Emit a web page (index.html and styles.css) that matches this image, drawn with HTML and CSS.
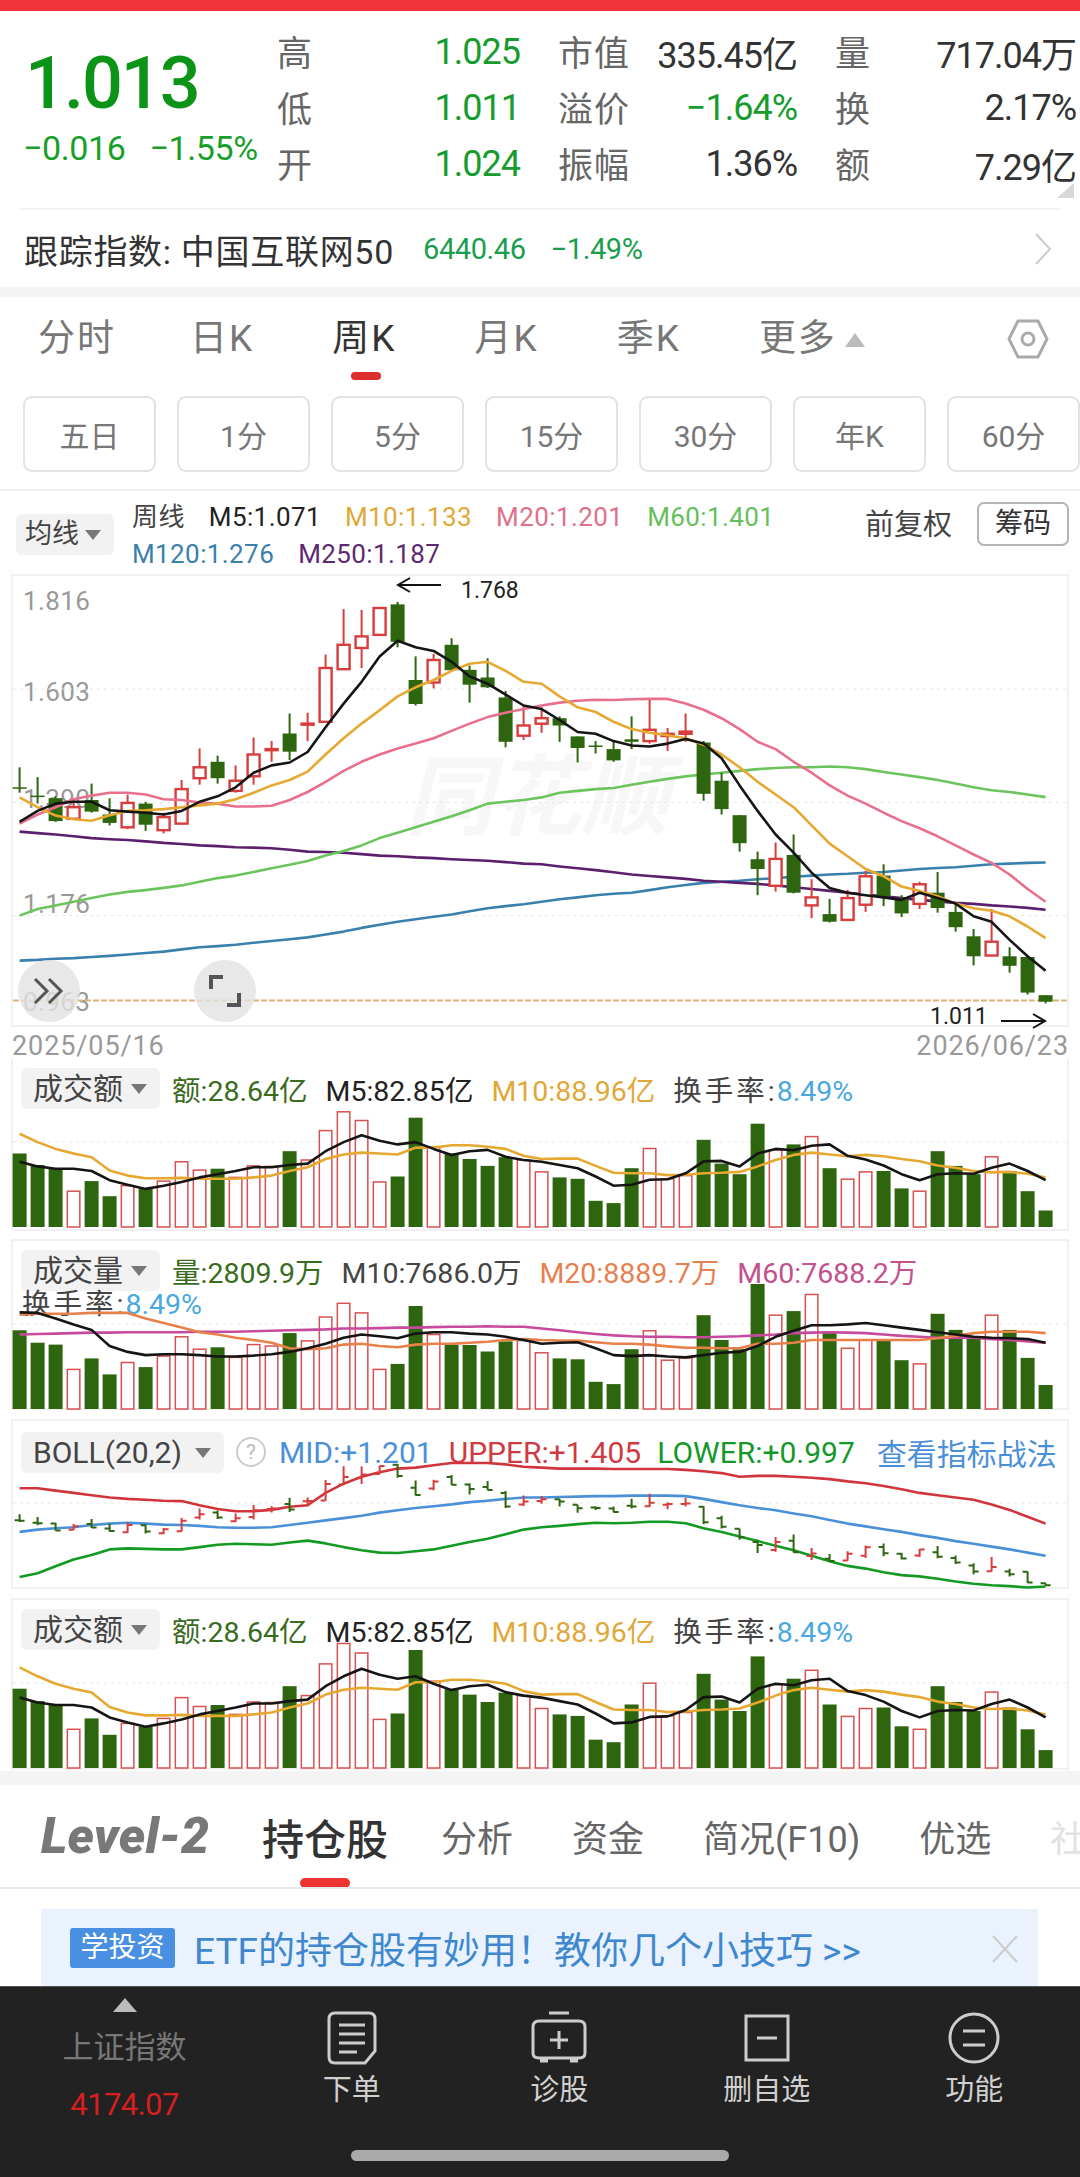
FILE: index.html
```html
<!DOCTYPE html>
<html>
<head>
    <meta charset="UTF-8">
    <meta name="viewport" content="width=device-width, initial-scale=1.0">
    <title>ETF 行情</title>
    <link rel="stylesheet" href="styles.css">
</head>
<body>

<div class="top-bar"></div>

<section class="quote">
    <div class="quote-main">
        <div class="price">1.013</div>
        <div class="change"><span>−0.016</span><span>−1.55%</span></div>
    </div>
    <div class="stats">
        <div class="stat"><span class="stat-label">高</span><span class="stat-value up">1.025</span></div>
        <div class="stat"><span class="stat-label">市值</span><span class="stat-value">335.45亿</span></div>
        <div class="stat"><span class="stat-label">量</span><span class="stat-value">717.04万</span></div>
        <div class="stat"><span class="stat-label">低</span><span class="stat-value up">1.011</span></div>
        <div class="stat"><span class="stat-label">溢价</span><span class="stat-value up">−1.64%</span></div>
        <div class="stat"><span class="stat-label">换</span><span class="stat-value">2.17%</span></div>
        <div class="stat"><span class="stat-label">开</span><span class="stat-value up">1.024</span></div>
        <div class="stat"><span class="stat-label">振幅</span><span class="stat-value">1.36%</span></div>
        <div class="stat"><span class="stat-label">额</span><span class="stat-value">7.29亿</span></div>
    </div>
    <div class="corner"></div>
</section>

<div class="track">
    <span class="track-name">跟踪指数: 中国互联网50</span>
    <span class="track-val">6440.46</span>
    <span class="track-val">−1.49%</span>
    <svg class="chevron" width="18" height="32" viewBox="0 0 18 32"><path d="M2 1 L16 16 L2 31"/></svg>
</div>

<div class="band"></div>

<nav class="tabs">
    <a>分时</a>
    <a>日K</a>
    <a class="active">周K</a>
    <a>月K</a>
    <a>季K</a>
    <a>更多<i class="tri-up"></i></a>
    <svg class="gear" width="42" height="40" viewBox="0 0 42 40"><path d="M2 20 L11 2 H31 L40 20 L31 38 H11 Z"/><circle cx="21" cy="20" r="6"/></svg>
</nav>

<div class="periods">
    <a>五日</a><a>1分</a><a>5分</a><a>15分</a><a>30分</a><a>年K</a><a>60分</a>
</div>

<section class="kline">
    <svg id="klinePlot" class="plot plot-main"></svg>
    <div class="kline-head">
        <div class="pill pill-ma">均线<i class="tri-down"></i></div>
        <div class="ma-legend">
            <div class="ma-row">
                <span class="c-dark">周线</span>
                <span class="c-black">M5:1.071</span>
                <span class="c-orange">M10:1.133</span>
                <span class="c-pink">M20:1.201</span>
                <span class="c-green">M60:1.401</span>
            </div>
            <div class="ma-row">
                <span class="c-blue">M120:1.276</span>
                <span class="c-purple">M250:1.187</span>
            </div>
        </div>
        <span class="adjust">前复权</span>
        <span class="chips">筹码</span>
    </div>
    <div class="kline-frame">
        <span class="watermark">同花顺</span>
        <span class="axis axis-1">1.816</span>
        <span class="axis axis-2">1.603</span>
        <span class="axis axis-3">1.390</span>
        <span class="axis axis-4">1.176</span>
        <span class="axis axis-5">0.963</span>
        <span class="note note-high">1.768</span>
        <span class="note note-low">1.011</span>
        <div class="round-btn btn-expand">
            <svg width="34" height="30" viewBox="0 0 34 30"><path d="M3 3 L15 15 L3 27 M17 3 L29 15 L17 27"/></svg>
        </div>
        <div class="round-btn btn-full">
            <svg width="32" height="32" viewBox="0 0 32 32"><path d="M2 14 V2 H14 M30 18 V30 H18"/></svg>
        </div>
    </div>
    <div class="dates"><span>2025/05/16</span><span>2026/06/23</span></div>
</section>

<section class="ind ind-amount">
    <svg id="amountPlot" class="plot"></svg>
    <div class="ind-head">
        <div class="pill">成交额<i class="tri-down"></i></div>
        <span class="c-vol">额:28.64亿</span>
        <span class="c-black">M5:82.85亿</span>
        <span class="c-orange">M10:88.96亿</span>
        <span class="c-dark turn">换手率:<em class="c-sky">8.49%</em></span>
    </div>
</section>

<section class="ind ind-volume">
    <svg id="volumePlot" class="plot"></svg>
    <div class="ind-head">
        <div class="pill">成交量<i class="tri-down"></i></div>
        <span class="c-vol">量:2809.9万</span>
        <span class="c-dark">M10:7686.0万</span>
        <span class="c-coral">M20:8889.7万</span>
        <span class="c-magenta">M60:7688.2万</span>
    </div>
    <div class="ind-sub c-dark turn">换手率:<em class="c-sky">8.49%</em></div>
</section>

<section class="ind ind-boll">
    <svg id="bollPlot" class="plot"></svg>
    <div class="ind-head">
        <div class="pill pill-boll">BOLL(20,2)<i class="tri-down"></i></div>
        <span class="help">?</span>
        <span class="c-mid">MID:+1.201</span>
        <span class="c-upper">UPPER:+1.405</span>
        <span class="c-lower">LOWER:+0.997</span>
        <span class="c-mid tactic">查看指标战法</span>
    </div>
</section>

<section class="ind ind-amount2">
    <svg id="amount2Plot" class="plot"></svg>
    <div class="ind-head">
        <div class="pill">成交额<i class="tri-down"></i></div>
        <span class="c-vol">额:28.64亿</span>
        <span class="c-black">M5:82.85亿</span>
        <span class="c-orange">M10:88.96亿</span>
        <span class="c-dark turn">换手率:<em class="c-sky">8.49%</em></span>
    </div>
</section>

<div class="band band-low"></div>

<nav class="info-tabs">
    <span class="level2">Level-2</span>
    <a class="active">持仓股</a>
    <a>分析</a>
    <a>资金</a>
    <a>简况(F10)</a>
    <a>优选</a>
    <a class="fade">社</a>
</nav>

<div class="tip-wrap">
    <div class="tip">
        <span class="tip-badge">学投资</span>
        <span class="tip-text">ETF的持仓股有妙用！教你几个小技巧 &gt;&gt;</span>
        <svg class="tip-close" width="26" height="28" viewBox="0 0 26 28"><path d="M1 1 L25 27 M25 1 L1 27"/></svg>
    </div>
</div>

<footer class="dock">
    <div class="dock-index">
        <i class="dock-tri"></i>
        <span class="dock-name">上证指数</span>
        <span class="dock-num">4174.07</span>
    </div>
    <div class="dock-item">
        <svg width="50" height="54" viewBox="0 0 50 54"><path d="M8 2 H42 Q48 2 48 8 V40 L38 52 H8 Q2 52 2 46 V8 Q2 2 8 2 Z M12 14 H38 M12 23 H38 M12 32 H38 M12 41 H30"/></svg>
        <span>下单</span>
    </div>
    <div class="dock-item">
        <svg width="58" height="54" viewBox="0 0 58 54"><path d="M19 2 H39 M9 10 H49 Q55 10 55 16 V42 Q55 47 49 47 H9 Q3 47 3 42 V16 Q3 10 9 10 Z M29 20 V38 M20 29 H38 M10 50 H18 M40 50 H48"/></svg>
        <span>诊股</span>
    </div>
    <div class="dock-item">
        <svg width="48" height="54" viewBox="0 0 48 54"><path d="M3 5 H45 V49 H3 Z M14 27 H34"/></svg>
        <span>删自选</span>
    </div>
    <div class="dock-item">
        <svg width="52" height="54" viewBox="0 0 52 54"><circle cx="26" cy="27" r="24"/><path d="M15 20 H37 M15 34 H37"/></svg>
        <span>功能</span>
    </div>
    <div class="home-bar"></div>
</footer>

<script src="chart.js"></script>
</body>
</html>
```
FILE: styles.css
```css
* {
    box-sizing: border-box;
}

body {
    margin: 0;
    width: 1080px;
    height: 2177px;
    overflow: hidden;
    position: relative;
    background-color: white;
    font-family: Roboto, "Noto Sans CJK SC", sans-serif;
    color: #333;
}

em, i {
    font-style: normal;
}

.top-bar {
    height: 11px;
    background-color: #ee333a;
}

/* Quote header */
.quote {
    position: relative;
    height: 200px;
    display: flex;
    border-bottom: 2px solid white;
}

.quote::after {
    content: "";
    position: absolute;
    left: 20px;
    right: 20px;
    bottom: -1px;
    border-top: 2px solid #f2f2f2;
}

.quote-main {
    width: 266px;
    padding: 33px 0 0 23px;
    color: #0b9416;
}

.price {
    font-size: 72px;
    line-height: 80px;
    font-weight: 500;
    letter-spacing: -2px;
    margin-left: 2px;
}

.change {
    display: flex;
    gap: 24px;
    font-size: 34px;
    line-height: 40px;
    margin-top: 4px;
    letter-spacing: -0.4px;
    color: #16a02a;
}

.stats {
    margin-left: 11px;
    display: grid;
    grid-template-columns: 243px 239px 241px;
    grid-auto-rows: 56px;
    column-gap: 38px;
    padding-top: 13px;
}

.stat {
    display: flex;
    justify-content: space-between;
    align-items: center;
}

.stat-label {
    font-size: 35px;
    color: #666;
    letter-spacing: 1px;
    margin-bottom: 4px;
}

.stat-value {
    font-size: 36px;
    letter-spacing: -1px;
    color: #333;
}

.stat-value.up {
    color: #169c2c;
}

.corner {
    position: absolute;
    right: 6px;
    bottom: 11px;
    border-left: 17px solid transparent;
    border-bottom: 15px solid #d8d8d8;
}

.track {
    height: 76px;
    display: flex;
    align-items: center;
    padding-left: 24px;
    position: relative;
}

.track-name {
    font-size: 34px;
    color: #333;
    margin-right: 29px;
    letter-spacing: 0.7px;
}

.track-val {
    font-size: 29px;
    color: #1a9e4e;
    margin-right: 25px;
    letter-spacing: -0.4px;
}

.chevron {
    position: absolute;
    right: 28px;
    top: 22px;
    fill: none;
    stroke: #ccc;
    stroke-width: 2;
}

.band {
    height: 10px;
    background-color: #f4f4f4;
}

/* Period tabs */
.tabs {
    height: 99px;
    display: flex;
    gap: 78px;
    padding: 19px 0 0 38px;
    position: relative;
    font-size: 37px;
    line-height: 46px;
    letter-spacing: 2px;
    color: #777;
}

.tabs a {
    position: relative;
}

.tabs a:first-child {
    margin-right: -4px;
}

.tabs a.active {
    color: #333;
}

.tabs a.active::after {
    content: "";
    position: absolute;
    left: 19px;
    top: 56px;
    width: 30px;
    height: 8px;
    border-radius: 4px;
    background-color: #dc2f2f;
}

.tri-up {
    display: inline-block;
    margin-left: 8px;
    vertical-align: 4px;
    border-left: 10px solid transparent;
    border-right: 10px solid transparent;
    border-bottom: 14px solid #bbb;
}

.gear {
    position: absolute;
    left: 1007px;
    top: 22px;
    fill: none;
    stroke: #aaa;
    stroke-width: 3;
}

.periods {
    height: 93px;
    padding-left: 23px;
    display: flex;
    gap: 21px;
}

.periods a {
    width: 133px;
    height: 76px;
    flex: none;
    border: 2px solid #e2e2e2;
    border-radius: 9px;
    display: flex;
    align-items: center;
    justify-content: center;
    font-size: 30px;
    color: #777;
}

/* K line section */
.kline {
    position: relative;
    height: 570px;
    border-top: 2px solid #f0f0f0;
}

.plot {
    position: absolute;
    left: 0;
    top: 0;
    width: 1080px;
    height: 100%;
    z-index: 2;
    pointer-events: none;
}

.ln {
    fill: none;
    stroke-width: 2.6;
    stroke-linejoin: round;
}

.m5 { stroke: #151515; }
.m10 { stroke: #e6a830; }
.m20 { stroke: #e8708c; }
.m60 { stroke: #6cc45c; }
.m120 { stroke: #3a80ac; }
.m250 { stroke: #5c1f6e; }
.v20 { stroke: #e8804a; }
.v60 { stroke: #c84a9c; }
.upper { stroke: #d2343c; }
.mid { stroke: #4a90d9; }
.lower { stroke: #139a22; }

.grid {
    stroke: #e6e6e6;
    stroke-width: 1;
    stroke-dasharray: 3 4;
}

.last-gold {
    stroke: #d8b468;
    stroke-width: 2;
    stroke-dasharray: 4 4;
}

.last-red {
    stroke: #e6b0a0;
    stroke-width: 2;
    stroke-dasharray: 2 6;
    stroke-dashoffset: 4;
}

.wick-red {
    fill: none;
    stroke: #d83c3c;
    stroke-width: 2;
}

.wick-green {
    fill: none;
    stroke: #2d660f;
    stroke-width: 2;
}

.bar-red {
    fill: white;
    stroke: #d85050;
    stroke-width: 1.5;
}

.bar-red.thick {
    stroke: #d83c3c;
    stroke-width: 2.4;
}

.bar-green {
    fill: #2d660f;
}

.arrow {
    fill: none;
    stroke: #111;
    stroke-width: 2;
}

.kline-head {
    height: 83px;
    display: flex;
    position: relative;
}

.pill {
    height: 41px;
    width: 139px;
    flex: none;
    background-color: #f2f2f2;
    border-radius: 6px;
    font-size: 30px;
    line-height: 41px;
    padding-left: 12px;
    color: #444;
    position: relative;
}

.pill-ma {
    width: 98px;
    margin: 23px 0 0 16px;
    font-size: 27px;
    padding-left: 9px;
}

.tri-down {
    position: absolute;
    right: 13px;
    top: 16px;
    border-left: 8px solid transparent;
    border-right: 8px solid transparent;
    border-top: 10px solid #777;
}

.ma-legend {
    margin-left: 18px;
    padding-top: 8px;
    font-size: 26px;
    line-height: 37px;
    letter-spacing: 0.4px;
}

.ma-row {
    display: flex;
    gap: 24px;
    white-space: nowrap;
}

.adjust {
    position: absolute;
    left: 865px;
    top: 12px;
    font-size: 29px;
    line-height: 44px;
    color: #444;
}

.chips {
    position: absolute;
    left: 977px;
    top: 11px;
    width: 92px;
    height: 44px;
    border: 2px solid #b5b5b5;
    border-radius: 7px;
    text-align: center;
    font-size: 28px;
    line-height: 40px;
    color: #333;
}

.c-dark { color: #444; }
.c-black { color: #222; }
.c-orange { color: #e0a838; }
.c-pink { color: #e0708a; }
.c-green { color: #66bf5a; }
.c-blue { color: #3a80ac; }
.c-purple { color: #5c2a72; }
.c-vol { color: #3b6b1e; }
.c-sky { color: #4aa8e0; }
.c-coral { color: #e6814f; }
.c-magenta { color: #c4508c; }
.c-mid { color: #4a90d9; }
.c-upper { color: #d03a42; }
.c-lower { color: #15982a; }

.kline-frame {
    position: relative;
    margin-left: 11px;
    width: 1058px;
    height: 453px;
    border: 2px solid #f0f0f0;
}

.watermark {
    position: absolute;
    left: 392px;
    top: 172px;
    font-size: 88px;
    line-height: 100px;
    font-weight: 700;
    font-style: italic;
    color: #f7f7f7;
}

.axis {
    position: absolute;
    left: 10px;
    font-size: 26px;
    line-height: 30px;
    letter-spacing: 0.4px;
    color: #999;
}

.axis-1 { top: 10px; }
.axis-2 { top: 101px; }
.axis-3 { top: 208px; }
.axis-4 { top: 313px; }
.axis-5 { top: 411px; }

.note {
    position: absolute;
    font-size: 23px;
    line-height: 28px;
    color: #222;
}

.note-high {
    left: 448px;
    top: 1px;
}

.note-low {
    left: 917px;
    top: 427px;
}

.round-btn {
    position: absolute;
    top: 384px;
    width: 62px;
    height: 62px;
    border-radius: 50%;
    background-color: rgba(226, 226, 226, 0.8);
    display: flex;
    align-items: center;
    justify-content: center;
    z-index: 3;
}

.round-btn svg {
    fill: none;
    stroke: #555;
    stroke-width: 3;
}

.btn-expand { left: 5px; }
.btn-full { left: 181px; }
.btn-full svg { stroke-width: 4; }

.dates {
    display: flex;
    justify-content: space-between;
    padding: 4px 11px 0 12px;
    font-size: 27px;
    line-height: 30px;
    letter-spacing: 0.9px;
    color: #999;
}

/* Indicator panels */
.ind {
    position: relative;
    margin-left: 11px;
    width: 1058px;
    border: 2px solid #f0f0f0;
}

.ind .plot {
    left: -13px;
    top: -2px;
    height: calc(100% + 4px);
}

.ind-amount {
    height: 172px;
    border-top: none;
    margin-bottom: 8px;
}

.ind-volume {
    height: 171px;
    margin-bottom: 9px;
}

.ind-boll {
    height: 170px;
    margin-bottom: 9px;
}

.ind-amount2 {
    height: 172px;
}

.ind-head {
    position: relative;
    display: flex;
    align-items: center;
    gap: 18px;
    margin-top: 9px;
    padding-left: 8px;
    font-size: 28.5px;
    white-space: nowrap;
}

.ind-amount .ind-head {
    padding-top: 9px;
    margin-top: 0;
}

.ind-head .pill {
    margin-right: -6px;
}

.ind-sub {
    position: relative;
    margin: -3px 0 0 9px;
    font-size: 28.5px;
    line-height: 34px;
}

/* the turnover label is set wider than the other legend texts */
.turn {
    letter-spacing: 3px;
}

.turn em {
    letter-spacing: 0;
    margin-left: -1px;
}

.pill-boll {
    width: 203px;
}

.help {
    width: 30px;
    height: 30px;
    border: 2px solid #ccc;
    border-radius: 50%;
    margin-right: -3px;
    text-align: center;
    font-size: 21px;
    line-height: 26px;
    color: #bbb;
}

.ind-boll .ind-head {
    gap: 16px;
    font-size: 30px;
}

.ind-boll .pill {
    margin-right: -4px;
}

.tactic {
    margin-left: 6px;
    font-size: 30px;
}

.band-low {
    height: 14px;
    margin-top: 1px;
}

/* Info tabs */
.info-tabs {
    position: relative;
    height: 104px;
    display: flex;
    align-items: center;
    padding-left: 41px;
    border-bottom: 2px solid #e8e8e8;
    font-size: 36px;
    color: #666;
    white-space: nowrap;
    overflow: hidden;
}

.level2 {
    width: 221px;
    flex: none;
    font-size: 50px;
    font-weight: 900;
    font-style: italic;
    color: #787878;
    letter-spacing: 0.2px;
}

.info-tabs a {
    flex: none;
    margin-right: 59px;
}

.info-tabs a.active {
    position: relative;
    font-size: 42px;
    font-weight: 500;
    color: #333;
    margin-right: 53px;
}

.info-tabs .fade {
    color: #e2e2e2;
}

.info-tabs::after {
    content: "";
    position: absolute;
    left: 300px;
    top: 93px;
    width: 50px;
    height: 10px;
    border-radius: 5px;
    background-color: #ee3333;
}

.tip-wrap {
    padding: 20px 42px 0 41px;
}

.tip {
    height: 78px;
    background-color: #eaf3fd;
    display: flex;
    align-items: center;
    padding-left: 29px;
    position: relative;
}

.tip-badge {
    width: 105px;
    height: 40px;
    border-radius: 3px;
    background-color: #4a90e2;
    color: white;
    font-size: 28px;
    line-height: 40px;
    text-align: center;
}

.tip-text {
    margin-left: 19px;
    font-size: 37px;
    color: #3f88d0;
}

.tip-close {
    position: absolute;
    right: 20px;
    top: 26px;
    fill: none;
    stroke: #ccc;
    stroke-width: 2;
}

/* Bottom dock */
.dock {
    position: absolute;
    left: 0;
    top: 1986px;
    width: 1080px;
    height: 191px;
    background-color: #222;
    border-top: 1px solid #555;
    display: grid;
    grid-template-columns: 248px repeat(4, 207.5px);
}

.dock-index {
    display: flex;
    flex-direction: column;
    align-items: center;
    padding-top: 11px;
    margin-left: 1px;
}

.dock-tri {
    border-left: 12px solid transparent;
    border-right: 12px solid transparent;
    border-bottom: 14px solid #bbb;
}

.dock-name {
    margin-top: 14px;
    font-size: 31px;
    line-height: 44px;
    color: #777;
}

.dock-num {
    margin-top: 15px;
    font-size: 31px;
    line-height: 40px;
    letter-spacing: -0.6px;
    color: #d81e1e;
}

.dock-item {
    display: flex;
    flex-direction: column;
    align-items: center;
    padding-top: 24px;
}

.dock-item svg {
    fill: none;
    stroke: #ccc;
    stroke-width: 3;
}

.dock-item span {
    margin-top: 7px;
    font-size: 29px;
    line-height: 36px;
    color: #d0d0d0;
}

.home-bar {
    position: absolute;
    left: 351px;
    top: 163px;
    width: 378px;
    height: 11px;
    border-radius: 6px;
    background-color: #aaa;
}
```
FILE: chart.js
```js
// Every series below is in y pixels read off an enlarged crop, so each plot scales them back
const barW = 14;
const barX = i => 19.6 + 18 * i;

// [wickTop, bodyTop, bodyBottom, wickBottom, isRed]
const candles = [
    [760,815,819,830,0],[787,838,842,860,0],[840,845,908,910,0],[850,870,902,905,1],
    [805,850,882,885,0],[845,890,913,920,0],[835,858,925,930,1],[855,860,918,935,0],
    [885,897,933,942,1],[795,820,915,918,1],[708,760,790,808,1],[728,745,790,805,0],
    [755,797,825,830,1],[678,725,785,808,1],[688,710,713,745,1],[612,667,717,740,0],
    [610,640,643,688,1],[450,487,635,638,1],[325,423,490,490,1],[327,400,432,487,1],
    [322,322,396,398,1],[305,312,415,430,0],[455,520,586,590,0],[448,465,527,543,1],
    [405,423,493,495,0],[480,492,533,582,0],[460,513,540,542,0],[550,568,690,705,0],
    [590,645,673,685,1],[595,625,640,665,1],[620,625,645,690,0],[675,675,707,747,0],
    [688,700,704,722,0],[690,710,741,745,0],[620,683,690,710,0],[575,657,688,695,1],
    [652,668,674,715,1],[612,662,668,690,1],[688,692,833,852,0],[775,797,875,890,0],
    [892,892,969,992,0],[992,1013,1040,1112,0],[967,1012,1086,1102,1],[945,1001,1105,1107,0],
    [1068,1118,1140,1175,1],[1122,1164,1185,1187,0],[1097,1120,1180,1183,1],[1045,1060,1138,1158,1],
    [1027,1058,1115,1142,0],[1112,1120,1162,1172,0],[1075,1082,1136,1150,1],[1048,1105,1147,1160,0],
    [1135,1158,1200,1212,0],[1205,1225,1280,1305,0],[1150,1240,1278,1280,1],[1255,1280,1306,1325,0],
    [1280,1282,1380,1385,0],[1387,1387,1405,1410,0]
];

const ma5 = [910,880,860,855,855,878,882,885,890,880,855,840,815,775,755,747,718,650,585,525,455,412,430,440,470,510,530,560,590,
    600,630,663,668,688,700,703,695,682,695,735,810,880,945,995,1050,1092,1105,1112,1118,1125,1105,1120,1135,1170,1185,1235,1280,1320];
const ma10 = [843,870,893,903,907,892,880,878,875,870,865,860,848,830,810,795,772,725,680,640,603,565,540,520,495,475,470,495,525,
    530,565,595,608,635,655,665,672,680,698,725,760,800,835,870,920,970,1005,1040,1060,1088,1100,1115,1135,1148,1155,1170,1198,1230];
const ma20 = [915,890,870,848,838,830,830,835,848,850,857,860,868,868,866,850,828,800,770,745,725,708,695,680,660,640,622,610,600,
    590,582,577,574,575,573,572,572,585,602,625,655,690,710,745,775,810,838,860,885,908,928,950,975,1000,1023,1055,1095,1130];
const ma60 = [1168,1150,1140,1130,1120,1110,1103,1098,1092,1085,1075,1065,1058,1048,1038,1028,1018,1003,990,975,955,940,925,910,895,878,860,855,850,
    843,830,825,820,817,808,800,792,785,780,775,770,765,762,760,760,758,760,765,773,780,787,795,805,815,823,828,835,842];
const ma120 = [1292,1290,1287,1285,1282,1279,1275,1271,1267,1261,1255,1252,1248,1243,1238,1233,1228,1220,1212,1202,1193,1185,1178,1171,1165,1156,1148,1142,1137,
    1130,1123,1118,1112,1108,1105,1098,1090,1084,1078,1075,1072,1068,1065,1061,1058,1055,1053,1050,1048,1044,1040,1037,1035,1031,1027,1025,1023,1022];
const ma250 = [937,941,945,950,955,958,960,964,968,971,975,977,980,981,983,987,992,993,995,999,1003,1005,1008,1010,1013,1015,1017,1021,1025,
    1027,1033,1038,1043,1049,1055,1059,1063,1067,1072,1075,1078,1081,1085,1090,1095,1100,1105,1110,1115,1120,1125,1129,1133,1136,1140,1143,1147,1152];

const amountBars = [
    [210,0],[235,0],[243,0],[292,1],[270,0],[303,0],[280,1],[287,0],[270,1],[228,1],[246,1],[243,0],[262,1],[237,1],[238,1],
    [205,0],[224,1],[160,1],[119,1],[138,1],[272,1],[260,0],[132,0],[195,1],[210,0],[222,0],[237,0],[218,0],[224,1],[250,1],
    [262,0],[265,0],[313,0],[318,0],[242,0],[199,1],[265,1],[258,1],[180,0],[232,0],[255,0],[145,0],[202,1],[190,0],[173,1],
    [242,0],[266,1],[250,1],[248,0],[286,0],[292,1],[205,0],[237,0],[255,0],[217,1],[248,0],[292,0],[334,0]
];
const amountM5 = [228,238,243,243,248,268,278,287,280,272,262,255,248,240,240,235,232,205,185,170,182,190,185,200,213,205,202,217,224,
    228,235,242,260,280,278,267,266,253,227,226,238,210,200,203,193,190,215,223,236,255,268,255,253,254,241,232,248,268];
const amountM10 = [167,185,200,210,218,247,258,264,264,263,265,265,265,262,258,248,240,222,212,208,210,212,197,197,192,192,195,200,215,
    222,221,221,237,252,253,253,257,256,253,252,250,238,224,213,208,212,216,213,216,222,227,236,241,248,251,250,254,262];

const volumeBars = [
    [591,0],[618,0],[622,0],[676,1],[652,0],[687,0],[661,1],[671,0],[647,1],[605,1],[632,1],[628,0],[650,1],[622,1],[625,1],
    [597,0],[614,1],[562,1],[532,1],[553,1],[676,1],[664,0],[538,0],[600,1],[622,0],[623,0],[637,0],[615,0],[613,1],[640,1],
    [652,0],[654,0],[703,0],[708,0],[632,0],[592,1],[656,1],[651,1],[558,0],[612,0],[632,0],[490,0],[558,1],[549,0],[513,1],
    [597,0],[630,1],[612,1],[612,0],[656,0],[664,1],[555,0],[590,0],[605,0],[558,1],[590,0],[651,0],[710,0]
];
const volM10 = [552,553,565,578,590,625,638,645,643,643,645,648,648,646,643,638,630,620,607,600,604,608,598,595,595,598,600,605,612,
    620,618,617,630,645,647,645,648,650,645,640,638,625,605,592,580,580,578,575,580,585,590,595,600,605,607,608,610,618];
const volM20 = [557,555,555,555,553,553,553,565,575,585,595,600,607,612,618,630,632,630,622,620,625,628,622,620,620,618,616,612,610,
    612,613,613,617,620,620,622,626,629,629,630,630,620,620,618,612,612,612,612,612,612,612,608,603,597,594,594,594,597];
const volM60 = [600,599,598,597,596,596,595,595,595,595,594,594,594,593,592,591,590,589,587,587,586,585,585,584,583,583,582,583,583,
    587,591,595,599,602,604,605,605,606,606,605,604,602,600,597,596,595,596,597,600,603,605,607,607,607,610,612,615,618];

const bollUpper = [935,935,940,945,950,955,958,960,962,963,972,980,985,985,982,975,972,945,925,910,900,892,890,885,880,880,880,883,888,
    890,892,892,892,893,893,893,893,895,898,902,910,908,908,910,912,915,920,924,930,937,945,950,955,960,970,982,997,1012];
const bollMid = [1030,1025,1022,1020,1015,1012,1010,1012,1014,1015,1017,1020,1021,1021,1020,1015,1010,1005,1000,995,988,983,978,974,970,965,962,958,955,
    955,954,953,952,952,951,951,951,952,958,965,972,978,983,990,996,1004,1012,1018,1024,1030,1037,1043,1050,1056,1062,1068,1075,1082];
const bollLower = [1128,1120,1105,1090,1080,1068,1066,1067,1068,1068,1063,1058,1056,1057,1058,1053,1049,1055,1063,1070,1075,1076,1072,1068,1060,1052,1045,1035,1025,
    1020,1017,1013,1010,1011,1010,1008,1008,1011,1022,1030,1040,1050,1060,1070,1082,1094,1104,1110,1118,1124,1127,1132,1138,1143,1146,1148,1151,1149];

function line(values, scale, cls) {
    const pts = values.map((v, i) => barX(i).toFixed(1) + ',' + scale(v).toFixed(1)).join(' ');
    return `<polyline class="ln ${cls}" points="${pts}"/>`;
}

function gridLine(y, cls) {
    return `<line class="${cls || 'grid'}" x1="13" x2="1067" y1="${y}" y2="${y}"/>`;
}

function bars(data, scale, bottom) {
    return data.map(([top, red], i) => {
        const y = scale(top);
        const h = bottom - y;
        const x = barX(i) - barW / 2;
        if (red) {
            return `<rect class="bar-red" x="${x + 0.75}" y="${y.toFixed(1)}" width="${barW - 1.5}" height="${h.toFixed(1)}"/>`;
        }
        return `<rect class="bar-green" x="${x}" y="${y.toFixed(1)}" width="${barW}" height="${h.toFixed(1)}"/>`;
    }).join('');
}

// K line chart
function drawKline() {
    const sy = z => z / 2.751;
    let out = gridLine(198) + gridLine(311.5) + gridLine(424.6);
    out += gridLine(509.6, 'last-gold') + gridLine(509.6, 'last-red');
    out += line(ma120, sy, 'm120') + line(ma250, sy, 'm250') + line(ma60, sy, 'm60');
    candles.forEach(([wt, bt, bb, wb, red], i) => {
        const x = barX(i);
        const c = red ? 'red' : 'green';
        out += `<line class="wick-${c}" x1="${x}" x2="${x}" y1="${sy(wt).toFixed(1)}" y2="${sy(wb).toFixed(1)}"/>`;
        const y = sy(bt);
        const h = Math.max(sy(bb) - y, 1);
        if (red) {
            out += `<rect class="bar-red thick" x="${x - barW / 2 + 1}" y="${y.toFixed(1)}" width="${barW - 2}" height="${h.toFixed(1)}"/>`;
        } else {
            out += `<rect class="bar-green" x="${x - barW / 2}" y="${y.toFixed(1)}" width="${barW}" height="${h.toFixed(1)}"/>`;
        }
    });
    out += line(ma20, sy, 'm20') + line(ma10, sy, 'm10') + line(ma5, sy, 'm5');
    // high and low markers
    out += '<path class="arrow" d="M441 94 H398 M410 87 L398 94 L410 101"/>';
    out += '<path class="arrow" d="M1001 530 H1045 M1033 523 L1045 530 L1033 537"/>';
    document.getElementById('klinePlot').innerHTML = out;
}

// amount panels share one series, the lower one is drawn a little taller
function drawAmount(id, top, gridY, bottom, stretch) {
    const sy = v => bottom - top - (370 - v) / 2.178 * stretch;
    let out = gridLine(gridY - top);
    out += bars(amountBars, sy, bottom - top);
    out += line(amountM10, sy, 'm10') + line(amountM5, sy, 'm5');
    document.getElementById(id).innerHTML = out;
}

function drawVolume(id, top) {
    const sy = z => z / 2.178 + 1060 - top;
    let out = gridLine(1325 - top);
    out += bars(volumeBars, sy, 1410 - top);
    out += line(volM60, sy, 'v60') + line(volM20, sy, 'v20') + line(volM10, sy, 'm5');
    document.getElementById(id).innerHTML = out;
}

function drawBoll(id, top) {
    const sy = z => z / 2.178 + 1060 - top;
    const sk = z => sy(1005 + (z - 817) * 0.24);
    let out = gridLine(1504 - top);
    out += line(bollLower, sy, 'lower') + line(bollMid, sy, 'mid') + line(bollUpper, sy, 'upper');
    candles.forEach(([wt, bt, bb, wb, red], i) => {
        const x = barX(i);
        const open = sk(red ? bb : bt).toFixed(1);
        const close = sk(red ? bt : bb).toFixed(1);
        out += `<path class="wick-${red ? 'red' : 'green'}" d="M${x} ${sk(wt).toFixed(1)} V${sk(wb).toFixed(1)} M${x - 5} ${open} H${x} M${x} ${close} H${x + 5}"/>`;
    });
    document.getElementById(id).innerHTML = out;
}

drawKline();
drawAmount('amountPlot', 1060, 1145, 1230, 1);
drawVolume('volumePlot', 1240);
drawBoll('bollPlot', 1420);
drawAmount('amount2Plot', 1599, 1684, 1769, 1.08);
```
